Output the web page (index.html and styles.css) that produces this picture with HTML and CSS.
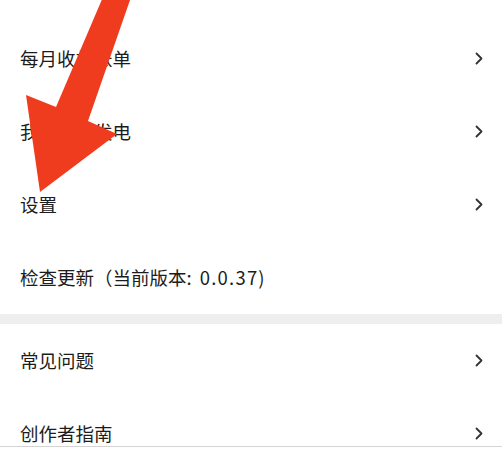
FILE: index.html
```html
<!DOCTYPE html>
<html lang="zh-CN">
<head>
<meta charset="utf-8">
<title>设置</title>
<link rel="stylesheet" href="styles.css">
</head>
<body>
<div class="page">
  <div class="content">
    <div class="group group-top">
      <div class="row"><span class="label">每月收益账单</span><svg class="chev" viewBox="0 0 8 13" width="8" height="13"><path d="M1.5 1.5 L6.5 6.5 L1.5 11.5"/></svg></div>
      <div class="row"><span class="label">我要为爱发电</span><svg class="chev" viewBox="0 0 8 13" width="8" height="13"><path d="M1.5 1.5 L6.5 6.5 L1.5 11.5"/></svg></div>
      <div class="row"><span class="label">设置</span><svg class="chev" viewBox="0 0 8 13" width="8" height="13"><path d="M1.5 1.5 L6.5 6.5 L1.5 11.5"/></svg></div>
      <div class="row"><span class="label">检查更新（当前版本: <span class="ver">0.0.37</span>)</span></div>
    </div>
    <div class="divider"></div>
    <div class="group">
      <div class="row"><span class="label">常见问题</span><svg class="chev" viewBox="0 0 8 13" width="8" height="13"><path d="M1.5 1.5 L6.5 6.5 L1.5 11.5"/></svg></div>
      <div class="row"><span class="label">创作者指南</span><svg class="chev" viewBox="0 0 8 13" width="8" height="13"><path d="M1.5 1.5 L6.5 6.5 L1.5 11.5"/></svg></div>
    </div>
  </div>
  <div class="tabbar"></div>
</div>
<svg class="arrow" viewBox="0 0 502 451" width="502" height="451">
  <polygon points="106,-10 133.5,-10 88,121 117,134 40,192 26,95 56,107"/>
</svg>
</body>
</html>
```
FILE: styles.css
```css
html, body {
  margin: 0;
  padding: 0;
  background: #ffffff;
}
body {
  font-family: "Noto Sans CJK SC", "Noto Sans", sans-serif;
  color: #1c1c1c;
  position: relative;
  width: 502px;
  height: 451px;
  overflow: hidden;
}
.page {
  display: flex;
  flex-direction: column;
  height: 451px;
}
.content {
  flex: 1;
  overflow: hidden;
}
.group-top {
  padding-top: 22px;
}
.row {
  height: 73px;
  display: flex;
  align-items: center;
  justify-content: space-between;
  padding: 0 19px 0 20px;
  box-sizing: border-box;
}
.label {
  font-size: 18.5px;
  line-height: 1.4;
  white-space: nowrap;
}
.ver {
  letter-spacing: 1.2px;
  margin-left: 4px;
}
.chev {
  display: block;
  fill: none;
  stroke: #333333;
  stroke-width: 1.8;
  stroke-linecap: round;
  stroke-linejoin: round;
}
.divider {
  height: 10px;
  background: #eeeeee;
}
.tabbar {
  height: 4px;
  border-top: 1px solid #d4d4d4;
  background: #ffffff;
}
.arrow {
  position: absolute;
  left: 0;
  top: 0;
  pointer-events: none;
}
.arrow polygon {
  fill: #f03c1e;
}
```
